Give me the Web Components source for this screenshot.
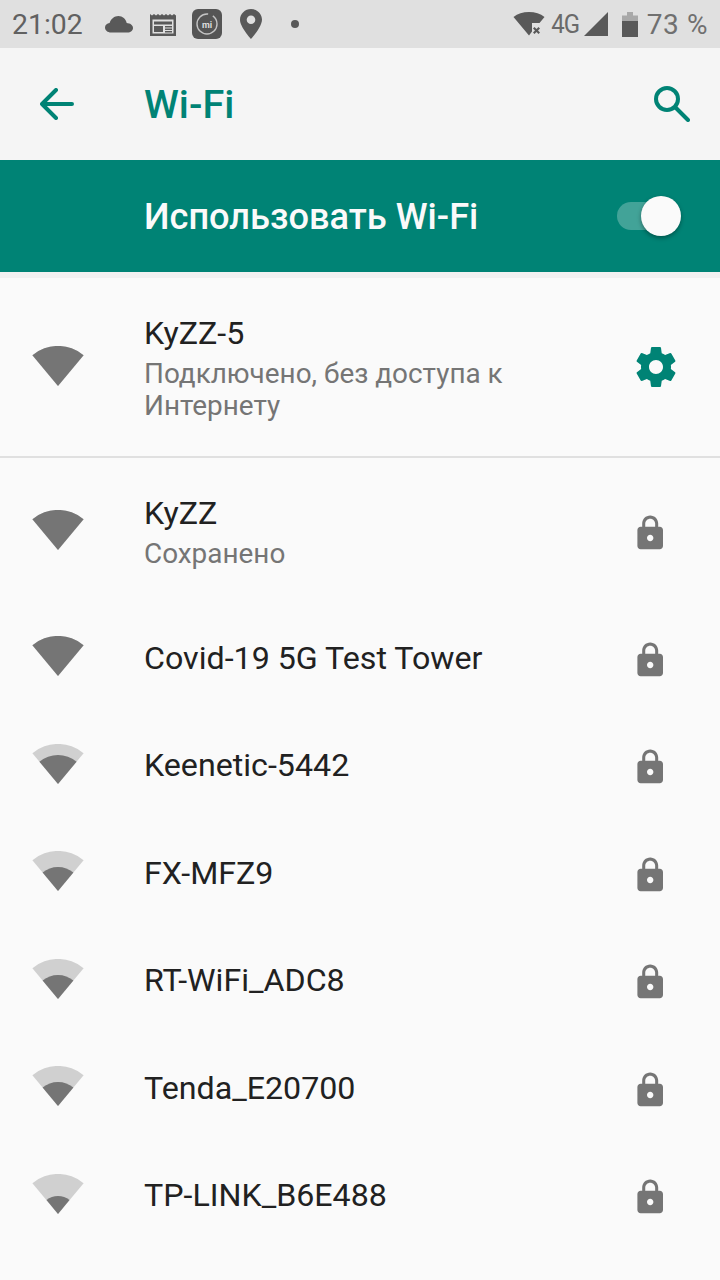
<!DOCTYPE html>
<html lang="ru">
<head>
<meta charset="utf-8">
<title>Wi-Fi</title>
<style>
  html, body { margin: 0; padding: 0; background: #fafafa; }
  body { width: 720px; height: 1280px; overflow: hidden; font-family: Roboto, "Noto Sans", sans-serif; }
</style>
</head>
<body>
<status-bar></status-bar>
<app-bar title="Wi-Fi"></app-bar>
<master-switch label="Использовать Wi-Fi"></master-switch>
<wifi-list>
  <wifi-row style="--row-h:180px" name="KyZZ-5" summary="Подключено, без доступа к Интернету" level="40" action="gear" divider></wifi-row>
  <wifi-row style="--row-h:146px" name="KyZZ" summary="Сохранено" level="40" action="lock"></wifi-row>
  <wifi-row name="Covid-19 5G Test Tower" level="40" action="lock"></wifi-row>
  <wifi-row name="Keenetic-5442" level="29" action="lock"></wifi-row>
  <wifi-row name="FX-MFZ9" level="24" action="lock"></wifi-row>
  <wifi-row name="RT-WiFi_ADC8" level="24" action="lock"></wifi-row>
  <wifi-row name="Tenda_E20700" level="24" action="lock"></wifi-row>
  <wifi-row name="TP-LINK_B6E488" level="18" action="lock"></wifi-row>
</wifi-list>

<script>
// apex of the sector is at (26, 40) in a 52x42 box
function sector(r) {
    const dx = (r * 0.64).toFixed(1), dy = (r * 0.77).toFixed(1);
    return `M26 40L${26 - dx} ${40 - dy}A${r} ${r} 0 0 1 ${+26 + +dx} ${40 - dy}Z`;
}

class StatusBar extends HTMLElement {
    constructor() {
        super();
        this.attachShadow({ mode: 'open' }).innerHTML = `
            <style>
                :host { display: flex; align-items: center; height: 48px; box-sizing: border-box; padding: 0 12px; background: #e0e0e0; color: #616161; font-size: 28.4px; }
                .time { width: 93px; }
                svg { display: block; flex: none; fill: #595959; }
                .mi { flex: none; margin-left: 16px; fill: #555; }
                .mi text { font: 700 9px Roboto, sans-serif; fill: #ddd; stroke: none; }
                .g { margin-left: 4px; font-size: 26px; letter-spacing: -1px; transform: scaleX(.92); color: #6a6a6a; }
                .pct { margin-left: 9px; font-size: 28px; letter-spacing: .6px; color: #707070; }
                .spacer { flex: 1; }
            </style>
            <span class="time">21:02</span>
            <svg width="28" height="18" viewBox="0 0 28 18"><path d="M6 17.5C2.6 17.5 0 15.3 0 12.5 0 10 2 8.2 4.6 7.9 6 3.8 9.4 1 13.4 1c4.2 0 7.5 3 8.3 7 3.4.2 6.3 2 6.3 4.9 0 2.6-2.4 4.6-5.5 4.6z"/></svg>
            <svg style="margin-left:17px" width="26" height="24" viewBox="0 0 26 24"><path fill-rule="evenodd" d="M0 2l2 1.5L4 2l2 1.5L8 2l2 1.5L12 2l2 1.5L16 2l2 1.5L20 2l2 1.5L24 2l2 1.5V24H0zM2.500 7.500v14h21v-14zM4 9.500h18v3H4zM4 14h9v6H4zM15 14h7v1.500h-7zM15 16.500h7V18h-7zM15 19h7v1.500h-7z"/></svg>
            <svg class="mi" width="30" height="30" viewBox="0 0 30 30">
                <rect width="30" height="30" rx="6"/>
                <circle cx="15" cy="15" r="10" fill="none" stroke="#c4c4c4" stroke-width="1.4" stroke-dasharray="48 5 10"/>
                <text x="15" y="18.500" text-anchor="middle">mi</text>
            </svg>
            <svg style="margin-left:18px" width="22" height="30" viewBox="0 0 22 30"><path fill-rule="evenodd" d="M11 0C5 0 0 4.800 0 10.800 0 18 11 30 11 30s11-12 11-19.200C22 4.800 17 0 11 0zm0 15a4.300 4.300 0 1 1 0-8.600 4.300 4.300 0 0 1 0 8.600z"/></svg>
            <svg style="margin-left:29px" width="8" height="8" viewBox="0 0 8 8"><circle cx="4" cy="4" r="4"/></svg>
            <span class="spacer"></span>
            <svg width="33" height="24" viewBox="0 0 33 24"><path d="M16 23.500L.5 5C4.500 1.800 10 0 16 0s11.500 1.800 15.500 5l-5 6h-7.500v8.500z"/><path d="M21.500 15l2 2 2-2 1.500 1.500-2 2 2 2-1.500 1.500-2-2-2 2-1.500-1.500 2-2-2-2z"/></svg>
            <span class="g">4G</span>
            <svg style="margin-left:3px" width="24" height="24" viewBox="0 0 24 24"><path d="M0 24L24 0v24z"/></svg>
            <svg style="margin-left:14px" width="16" height="25" viewBox="0 0 16 25"><path fill="#a8a8a8" d="M5 0h6v3.500h5V9H0V3.500h5z"/><path d="M0 9h16v16H0z"/></svg>
            <span class="pct">73 %</span>
        `;
    }
}

class AppBar extends HTMLElement {
    constructor() {
        super();
        this.attachShadow({ mode: 'open' }).innerHTML = `
            <style>
                :host { display: flex; align-items: center; height: 112px; background: #f5f5f5; color: #008375; }
                svg { display: block; flex: none; fill: none; stroke: #008375; stroke-width: 4; stroke-linecap: round; stroke-linejoin: round; }
                .back { margin-left: 40px; }
                h1 { flex: 1; margin: 0 0 0 70px; padding-top: 2px; font: 500 39.6px/1 Roboto, sans-serif; }
                .search { margin-right: 30px; }
            </style>
            <svg class="back" width="34" height="32" viewBox="0 0 34 32"><path d="M2 16h30M16 2L2 16l14 14"/></svg>
            <h1>${this.getAttribute('title')}</h1>
            <svg class="search" width="36" height="36" viewBox="0 0 36 36"><circle cx="13" cy="13" r="11"/><path d="M22 22l12 12"/></svg>
        `;
    }
}

class MasterSwitch extends HTMLElement {
    constructor() {
        super();
        this.attachShadow({ mode: 'open' }).innerHTML = `
            <style>
                :host { display: flex; align-items: center; height: 112px; padding-left: 144px; background: #008375; color: #fafafa; }
                span { flex: 1; padding-top: 2px; font: 500 36.2px/1 Roboto, sans-serif; }
                .track { position: relative; width: 60px; height: 28px; margin-right: 43px; border-radius: 14px; background: rgba(255,255,255,.26); }
                .thumb { position: absolute; right: -4px; top: -6px; width: 40px; height: 40px; border-radius: 50%; background: #fafafa; box-shadow: 0 2px 4px rgba(0,0,0,.35); }
            </style>
            <span>${this.getAttribute('label')}</span>
            <div class="track"><div class="thumb"></div></div>
        `;
    }
}

class WifiList extends HTMLElement {
    constructor() {
        super();
        this.attachShadow({ mode: 'open' }).innerHTML = `
            <style>
                :host { display: block; border-top: 6px solid #f1f1f1; background: #fafafa; }
            </style>
            <slot></slot>
        `;
    }
}

class WifiRow extends HTMLElement {
    constructor() {
        super();
        const level = +this.getAttribute('level');
        const summary = this.getAttribute('summary');
        const gear = this.getAttribute('action') === 'gear';
        const action = gear
            ? `<svg class="gear" width="48" height="48" viewBox="0 0 24 24"><path fill="#008375" d="M19.43 12.98c.04-.32.07-.64.07-.98s-.03-.66-.07-.98l2.11-1.65c.19-.15.24-.42.12-.64l-2-3.46c-.12-.22-.39-.3-.61-.22l-2.49 1c-.52-.4-1.08-.73-1.69-.98l-.38-2.65C14.46 2.18 14.25 2 14 2h-4c-.25 0-.46.18-.49.42l-.38 2.65c-.61.25-1.17.59-1.69.98l-2.49-1c-.23-.09-.49 0-.61.22l-2 3.46c-.13.22-.07.49.12.64l2.11 1.65c-.04.32-.07.65-.07.98s.03.66.07.98l-2.11 1.65c-.19.15-.24.42-.12.64l2 3.46c.12.22.39.3.61.22l2.49-1c.52.4 1.08.73 1.69.98l.38 2.65c.03.24.24.42.49.42h4c.25 0 .46-.18.49-.42l.38-2.65c.61-.25 1.17-.59 1.69-.98l2.49 1c.23.09.49 0 .61-.22l2-3.46c.12-.22.07-.49-.12-.64l-2.11-1.65zM12 15.5c-1.93 0-3.5-1.57-3.5-3.5s1.57-3.5 3.5-3.5 3.5 1.57 3.5 3.5-1.57 3.5-3.5 3.5z"/></svg>`
            : `<svg class="lock" width="38.4" height="38.4" viewBox="0 0 24 24"><path fill="#757575" d="M18 8h-1V6c0-2.76-2.24-5-5-5S7 3.24 7 6v2H6c-1.1 0-2 .9-2 2v10c0 1.1.9 2 2 2h12c1.1 0 2-.9 2-2V10c0-1.1-.9-2-2-2zm-6 9c-1.1 0-2-.9-2-2s.9-2 2-2 2 .9 2 2-.9 2-2 2zm3.100-9H8.900V6c0-1.710 1.390-3.100 3.100-3.100 1.710 0 3.100 1.390 3.100 3.100v2z"/></svg>`;
        this.attachShadow({ mode: 'open' }).innerHTML = `
            <style>
                :host { display: flex; align-items: center; height: var(--row-h, 107.5px); box-sizing: border-box; }
                :host([divider]) { border-bottom: 2px solid #e0e0e0; }
                .signal { display: block; flex: none; margin: 0 0 1px 32px; }
                .text { flex: 1; min-width: 0; margin-left: 60px; }
                .name { font-size: 32.2px; line-height: 42px; color: #212121; }
                .summary { margin-top: 4px; font-size: 27.9px; line-height: 32px; color: #757575; max-width: 420px; }
                .gear { display: block; flex: none; margin-right: 40px; }
                .lock { display: block; flex: none; margin: 4px 51px 0 0; }
            </style>
            <svg class="signal" width="52" height="42" viewBox="0 0 52 42">
                <path fill="#d0d0d0" d="${sector(40)}"/>
                <path fill="#757575" d="${sector(level)}"/>
            </svg>
            <div class="text">
                <div class="name">${this.getAttribute('name')}</div>
                ${summary ? `<div class="summary">${summary}</div>` : ''}
            </div>
            ${action}
        `;
    }
}

customElements.define('status-bar', StatusBar);
customElements.define('app-bar', AppBar);
customElements.define('master-switch', MasterSwitch);
customElements.define('wifi-list', WifiList);
customElements.define('wifi-row', WifiRow);
</script>
</body>
</html>
